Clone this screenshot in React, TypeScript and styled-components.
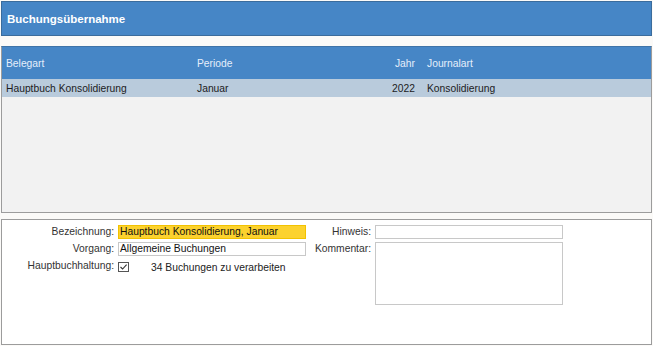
import React from "react";
import styled, { createGlobalStyle } from "styled-components";

const Global = createGlobalStyle`
  html, body { margin: 0; padding: 0; background: #fbfaf8; }
  body { font-family: "Liberation Sans", Arial, sans-serif; font-size: 10.3px; color: #222; }
  * { box-sizing: border-box; }
`;

const Page = styled.div`
  width: 653px;
  height: 346px;
  padding: 1px 1px 1px 1px;
  display: flex;
  flex-direction: column;
`;

const TitleBar = styled.div`
  height: 35px;
  background: #4686c6;
  border: 1px solid #3b6c9c;
  display: flex;
  align-items: center;
  padding-left: 5px;
  color: #fff;
  font-weight: bold;
  font-size: 11.5px;
`;

const GridPanel = styled.div`
  margin-top: 10px;
  height: 167px;
  border: 1px solid #9c9c9c;
  border-top-color: #3f74a8;
  background: #f2f2f2;
  display: flex;
  flex-direction: column;
`;

const Row = styled.div<{ $head?: boolean }>`
  display: grid;
  grid-template-columns: 191px 191px 36px 1fr;
  align-items: center;
  height: ${(p) => (p.$head ? "32px" : "18px")};
  background: ${(p) => (p.$head ? "#4686c6" : "#b9cbdc")};
  color: ${(p) => (p.$head ? "#e4eefb" : "#1c1c1c")};
`;

const Cell = styled.div<{ $right?: boolean }>`
  padding: ${(p) => (p.$right ? "0 5px 0 0" : "0 0 0 4px")};
  text-align: ${(p) => (p.$right ? "right" : "left")};
  white-space: nowrap;
`;

const LastCell = styled(Cell)`
  padding-left: 7px;
`;

const FormPanel = styled.div`
  margin-top: 6px;
  flex: 1;
  border: 1px solid #9c9c9c;
  background: #fff;
  display: grid;
  grid-template-columns: 112px 188px 61px 188px;
  grid-template-rows: 14px 14px 16px;
  column-gap: 4px;
  row-gap: 3px;
  align-content: start;
  padding-top: 5px;
`;

const Label = styled.div`
  text-align: right;
  color: #333;
  line-height: 14px;
  white-space: nowrap;
`;

const Field = styled.div<{ $highlight?: boolean }>`
  height: 14px;
  border: 1px solid ${(p) => (p.$highlight ? "#f2c200" : "#c8c8c8")};
  background: ${(p) => (p.$highlight ? "#fcd22e" : "#fff")};
  line-height: 12px;
  padding-left: 1px;
  color: #111;
  white-space: nowrap;
  overflow: hidden;
`;

const TextArea = styled.div`
  grid-column: 4;
  grid-row: 2 / span 3;
  height: 63px;
  border: 1px solid #c8c8c8;
  background: #fff;
`;

const CheckLine = styled.div`
  display: flex;
  align-items: center;
  gap: 22px;
  color: #222;
  white-space: nowrap;
`;

const CheckBox = () => (
  <svg width="11" height="10" viewBox="0 0 11 10">
    <rect x="0.5" y="0.5" width="10" height="9" fill="#fff" stroke="#555" />
    <path d="M2.5 5 L4.6 7 L8.6 2.6" fill="none" stroke="#333" strokeWidth="1.1" />
  </svg>
);

export default function App() {
  return (
    <>
      <Global />
      <Page>
        <TitleBar>Buchungsübernahme</TitleBar>
        <GridPanel>
          <Row $head>
            <Cell>Belegart</Cell>
            <Cell>Periode</Cell>
            <Cell $right>Jahr</Cell>
            <LastCell>Journalart</LastCell>
          </Row>
          <Row>
            <Cell>Hauptbuch Konsolidierung</Cell>
            <Cell>Januar</Cell>
            <Cell $right>2022</Cell>
            <LastCell>Konsolidierung</LastCell>
          </Row>
        </GridPanel>
        <FormPanel>
          <Label>Bezeichnung:</Label>
          <Field $highlight>Hauptbuch Konsolidierung, Januar</Field>
          <Label>Hinweis:</Label>
          <Field />
          <Label>Vorgang:</Label>
          <Field>Allgemeine Buchungen</Field>
          <Label>Kommentar:</Label>
          <TextArea />
          <Label>Hauptbuchhaltung:</Label>
          <CheckLine>
            <CheckBox />
            <span>34 Buchungen zu verarbeiten</span>
          </CheckLine>
        </FormPanel>
      </Page>
    </>
  );
}
